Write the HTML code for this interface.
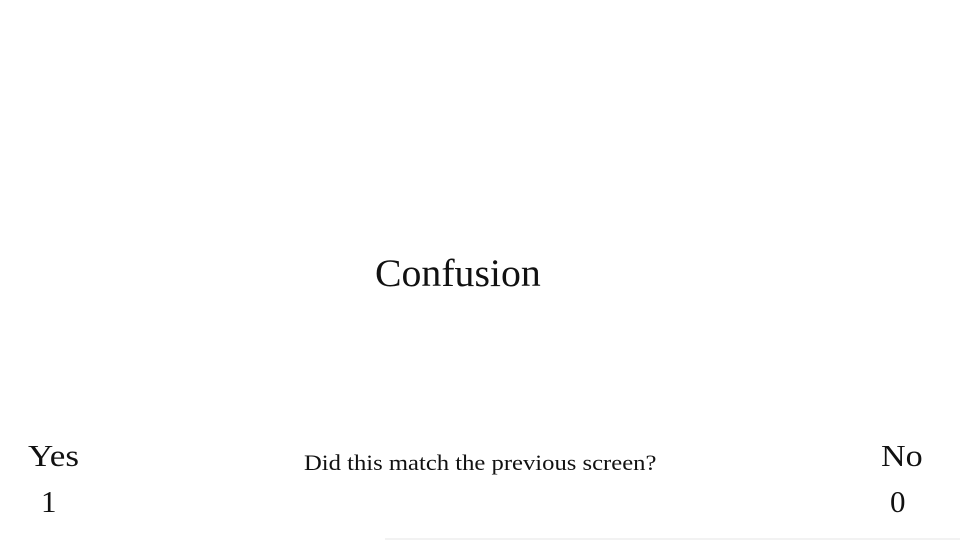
<!DOCTYPE html>
<html><head><meta charset="utf-8"><style>
html,body{margin:0;padding:0;width:960px;height:540px;background:#fff;overflow:hidden;font-family:"Liberation Serif",serif;color:#111;}
.t{position:absolute;white-space:nowrap;line-height:1;transform-origin:left top;}
</style></head><body>
<div class="t" style="left:375px;top:254px;font-size:39px;transform:scaleX(1.02);">Confusion</div>
<div class="t" style="left:28px;top:440px;font-size:31px;transform:scaleX(1.13);">Yes</div>
<div class="t" style="left:41px;top:486px;font-size:31px;">1</div>
<div class="t" style="left:881px;top:440px;font-size:31px;transform:scaleX(1.1);">No</div>
<div class="t" style="left:890px;top:486px;font-size:31px;">0</div>
<div class="t" style="left:304px;top:452px;font-size:22px;transform:scaleX(1.12);">Did this match the previous screen?</div>
<div style="position:absolute;left:385px;top:538px;width:575px;height:2px;background:#f2f2f2;"></div>
</body></html>
